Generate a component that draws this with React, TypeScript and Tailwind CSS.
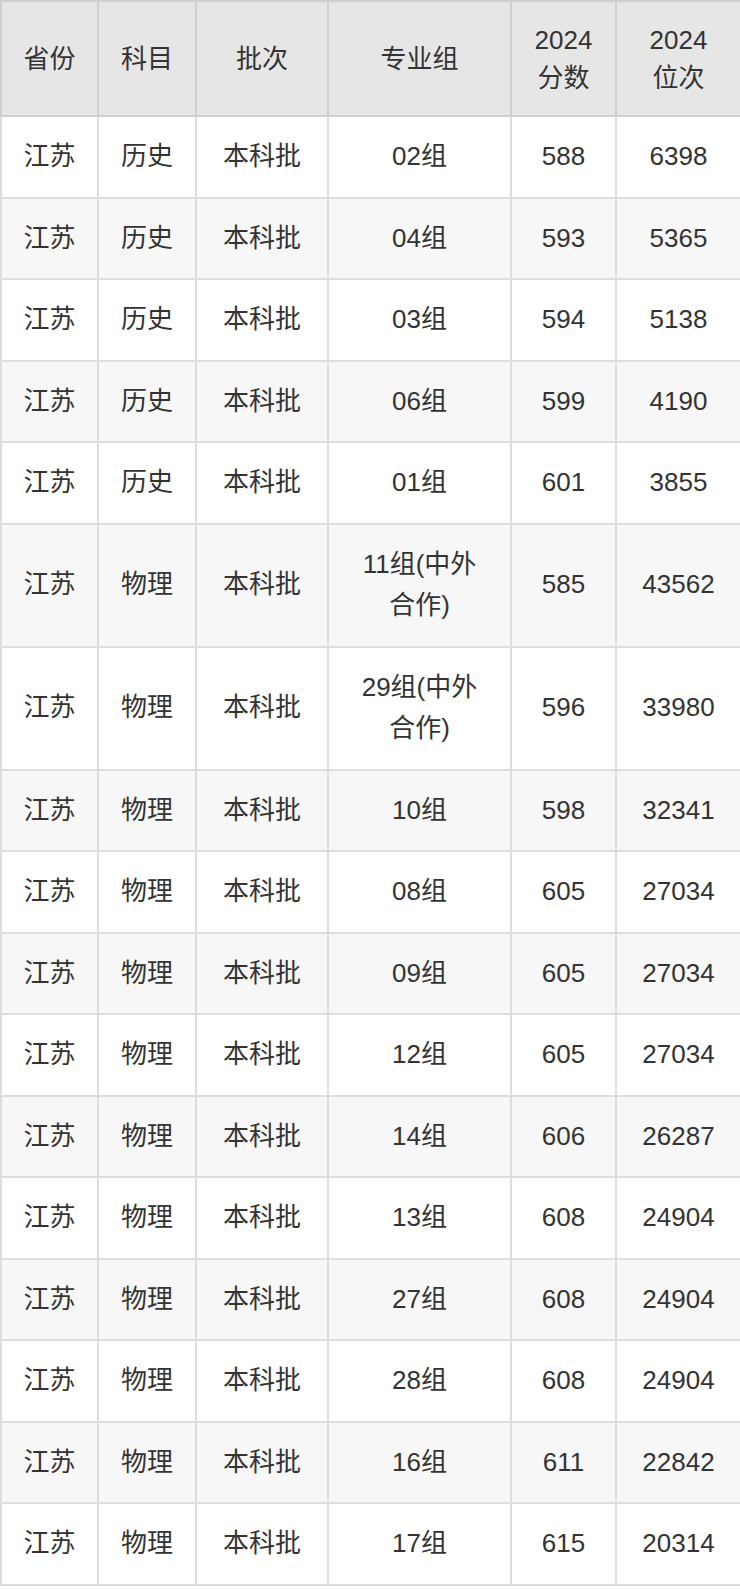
const rows: [string, string, string, string, string, string][] = [
  ['江苏', '历史', '本科批', '02组', '588', '6398'],
  ['江苏', '历史', '本科批', '04组', '593', '5365'],
  ['江苏', '历史', '本科批', '03组', '594', '5138'],
  ['江苏', '历史', '本科批', '06组', '599', '4190'],
  ['江苏', '历史', '本科批', '01组', '601', '3855'],
  ['江苏', '物理', '本科批', '11组(中外合作)', '585', '43562'],
  ['江苏', '物理', '本科批', '29组(中外合作)', '596', '33980'],
  ['江苏', '物理', '本科批', '10组', '598', '32341'],
  ['江苏', '物理', '本科批', '08组', '605', '27034'],
  ['江苏', '物理', '本科批', '09组', '605', '27034'],
  ['江苏', '物理', '本科批', '12组', '605', '27034'],
  ['江苏', '物理', '本科批', '14组', '606', '26287'],
  ['江苏', '物理', '本科批', '13组', '608', '24904'],
  ['江苏', '物理', '本科批', '27组', '608', '24904'],
  ['江苏', '物理', '本科批', '28组', '608', '24904'],
  ['江苏', '物理', '本科批', '16组', '611', '22842'],
  ['江苏', '物理', '本科批', '17组', '615', '20314'],
];

const headers = ['省份', '科目', '批次', '专业组', '2024分数', '2024位次'];

export default function App() {
  return (
    <div className="w-[740px] bg-white font-['Liberation_Sans','Noto_Sans_CJK_SC',sans-serif] text-[26px] text-[#333]">
      <table className="w-[740px] table-fixed border-collapse">
        <colgroup>
          <col className="w-[97px]" />
          <col className="w-[98px]" />
          <col className="w-[132px]" />
          <col className="w-[183px]" />
          <col className="w-[105px]" />
          <col className="w-[125px]" />
        </colgroup>
        <thead>
          <tr className="h-[115px] bg-[#e6e6e6]">
            {headers.map((h) => (
              <th
                key={h}
                className="border-2 border-[#cfcfcf] px-4 text-center font-normal leading-[38px]"
              >
                {h.startsWith('2024') ? (
                  <>
                    2024
                    <br />
                    {h.slice(4)}
                  </>
                ) : (
                  h
                )}
              </th>
            ))}
          </tr>
        </thead>
        <tbody>
          {rows.map((r, i) => (
            <tr key={i} className={i % 2 === 1 ? 'bg-[#f7f7f7]' : 'bg-white'}>
              {r.map((c, j) => (
                <td
                  key={j}
                  className={
                    j === 3
                      ? 'border-2 border-[#dddddd] px-[24px] py-[19px] text-center leading-[41.5px]'
                      : 'border-2 border-[#dddddd] px-4 py-[19px] text-center leading-[41.5px]'
                  }
                >
                  {c}
                </td>
              ))}
            </tr>
          ))}
        </tbody>
      </table>
    </div>
  );
}
